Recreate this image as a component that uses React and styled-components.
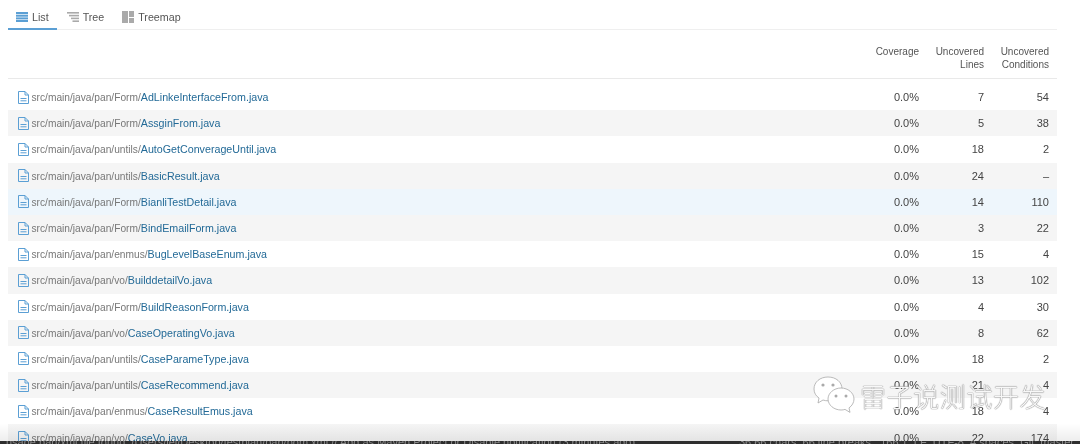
import React from "react"
import styled, { createGlobalStyle } from "styled-components"

const GlobalStyle = createGlobalStyle`
  html, body {
    margin: 0;
    padding: 0;
    background: #fff;
    overflow: hidden;
  }
  body {
    font-family: "Liberation Sans", Arial, sans-serif;
    font-size: 11px;
    color: #444;
  }
`

const Page = styled.div`
  position: relative;
  width: 1080px;
  height: 444px;
  overflow: hidden;
  padding: 0 23px 0 8px;
  box-sizing: border-box;
  filter: blur(0.35px);
`

const Tabs = styled.div`
  display: flex;
  height: 29px;
  border-bottom: 1px solid #efefef;
  box-sizing: content-box;
`

const Tab = styled.div`
  display: flex;
  align-items: center;
  gap: 4px;
  height: 30px;
  box-sizing: border-box;
  padding: 6px 8px 0 8px;
  margin-right: 2px;
  font-size: 10.7px;
  color: #555;
  border-bottom: 2px solid ${p => (p.$active ? "#5b9fd4" : "transparent")};

  svg {
    display: block;
  }
`

const HeaderRow = styled.div`
  display: grid;
  grid-template-columns: 1fr 65px 65px 65px;
  height: 48px;
  border-bottom: 1px solid #e9e9e9;
  margin-bottom: 5px;
`

const HeaderCell = styled.div`
  grid-column: ${p => p.$col};
  padding: 15px 8px 0 0;
  text-align: right;
  font-size: 10px;
  line-height: 13px;
  color: #555;
`

const Row = styled.div`
  display: grid;
  grid-template-columns: 1fr 65px 65px 65px;
  align-items: center;
  height: 26.2px;
  background: ${p => (p.$hl ? "#eef6fc" : p.$odd ? "#f5f5f5" : "#fff")};
`

const FileCell = styled.div`
  display: flex;
  align-items: center;
  padding-left: 10px;
  white-space: nowrap;
`

const FileIcon = styled.svg`
  width: 11px;
  height: 13px;
  margin-right: 2.5px;
  flex: none;
`

const FilePath = styled.span`
  font-size: 10.2px;
  color: #777;
`

const FileLink = styled.span`
  font-size: 10.7px;
  color: #236a97;
`

const Num = styled.div`
  padding-right: 8px;
  text-align: right;
  font-size: 11px;
  color: #444;
`

const BottomFade = styled.div`
  position: absolute;
  left: 0;
  right: 0;
  bottom: 3px;
  height: 17px;
  background: linear-gradient(rgba(0, 0, 0, 0), rgba(0, 0, 0, 0.07));
`

const StatusBar = styled.div`
  position: absolute;
  left: 0;
  right: 0;
  bottom: 0;
  height: 3px;
  overflow: hidden;
  background: #2e2e2e;
  display: flex;
  justify-content: space-between;
  padding: 0 6px;
  font-size: 11px;
  line-height: 3px;
  color: #8a8a8a;
  white-space: nowrap;
`

const Watermark = styled.div`
  position: absolute;
  left: 813px;
  top: 376px;
  display: flex;
  align-items: center;
  gap: 5px;
`

const WatermarkText = styled.span`
  font-family: "Noto Sans CJK SC", sans-serif;
  font-weight: 300;
  font-size: 26px;
  letter-spacing: 0.6px;
  color: rgba(255, 255, 255, 0.95);
  text-shadow: 0 0 1px #666, 0 0 1px #888;
`

const rows = [
  ["src/main/java/pan/Form/", "AdLinkeInterfaceFrom.java", "7", "54"],
  ["src/main/java/pan/Form/", "AssginFrom.java", "5", "38"],
  ["src/main/java/pan/untils/", "AutoGetConverageUntil.java", "18", "2"],
  ["src/main/java/pan/untils/", "BasicResult.java", "24", "–"],
  ["src/main/java/pan/Form/", "BianliTestDetail.java", "14", "110"],
  ["src/main/java/pan/Form/", "BindEmailForm.java", "3", "22"],
  ["src/main/java/pan/enmus/", "BugLevelBaseEnum.java", "15", "4"],
  ["src/main/java/pan/vo/", "BuilddetailVo.java", "13", "102"],
  ["src/main/java/pan/Form/", "BuildReasonForm.java", "4", "30"],
  ["src/main/java/pan/vo/", "CaseOperatingVo.java", "8", "62"],
  ["src/main/java/pan/untils/", "CaseParameType.java", "18", "2"],
  ["src/main/java/pan/untils/", "CaseRecommend.java", "21", "4"],
  ["src/main/java/pan/enmus/", "CaseResultEmus.java", "18", "4"],
  ["src/main/java/pan/vo/", "CaseVo.java", "22", "174"],
]

function ListIcon() {
  return (
    <svg width="12" height="10" viewBox="0 0 12 10" fill="#5b9fd4">
      <rect x="0" y="0" width="12" height="2" />
      <rect x="0" y="2.7" width="12" height="2" />
      <rect x="0" y="5.4" width="12" height="2" />
      <rect x="0" y="8" width="12" height="2" />
    </svg>
  )
}

function TreeIcon() {
  return (
    <svg width="12" height="10" viewBox="0 0 12 10" fill="#aaa">
      <rect x="0" y="0" width="12" height="1.6" />
      <rect x="2" y="2.8" width="10" height="1.6" />
      <rect x="4" y="5.6" width="8" height="1.6" />
      <rect x="5.5" y="8.4" width="6.5" height="1.6" />
    </svg>
  )
}

function TreemapIcon() {
  return (
    <svg width="12" height="12" viewBox="0 0 12 12" fill="#aaa">
      <rect x="0" y="0" width="6" height="12" />
      <rect x="7" y="0" width="5" height="6" />
      <rect x="7" y="7" width="5" height="5" />
    </svg>
  )
}

function DocIcon() {
  return (
    <FileIcon viewBox="0 0 11 13" fill="none" stroke="#5b9fd4" strokeWidth="1">
      <path d="M0.5 0.5H7L10.5 4V12.5H0.5Z" />
      <path d="M7 0.5V4H10.5" />
      <path d="M2.5 7.5H8.5M2.5 9.8H8.5" />
    </FileIcon>
  )
}

function WeChatIcon() {
  return (
    <svg width="42" height="38" viewBox="0 0 42 38">
      <path
        d="M15 1C7 1 1 6 1 13c0 4 2 7 5 9l-1 5 5-3c2 .6 3 .8 5 .8C23 25 29 20 29 13S23 1 15 1Z"
        fill="#fff"
        stroke="#aaa"
        strokeWidth="0.8"
      />
      <path
        d="M28 12c-7 0-13 5-13 11s6 11 13 11c1.500 0 3-.2 4-.6l5 3-1-4.500c3-2 5-5.400 5-8.900 0-6-6-11-13-11Z"
        fill="#fff"
        stroke="#aaa"
        strokeWidth="0.8"
      />
      <circle cx="10" cy="9" r="1.600" fill="#aaa" />
      <circle cx="20" cy="9" r="1.600" fill="#aaa" />
      <circle cx="23" cy="20" r="1.500" fill="#aaa" />
      <circle cx="33" cy="20" r="1.500" fill="#aaa" />
    </svg>
  )
}

export default function App() {
  return (
    <Page>
      <GlobalStyle />
      <Tabs>
        <Tab $active>
          <ListIcon />
          List
        </Tab>
        <Tab>
          <TreeIcon />
          Tree
        </Tab>
        <Tab>
          <TreemapIcon />
          Treemap
        </Tab>
      </Tabs>
      <HeaderRow>
        <HeaderCell $col={2}>Coverage</HeaderCell>
        <HeaderCell $col={3}>
          Uncovered
          <br />
          Lines
        </HeaderCell>
        <HeaderCell $col={4}>
          Uncovered
          <br />
          Conditions
        </HeaderCell>
      </HeaderRow>
      {rows.map((r, i) => (
        <Row key={r[1]} $odd={i % 2 === 1} $hl={i === 4}>
          <FileCell>
            <DocIcon />
            <span>
              <FilePath>{r[0]}</FilePath>
              <FileLink>{r[1]}</FileLink>
            </span>
          </FileCell>
          <Num>0.0%</Num>
          <Num>{r[2]}</Num>
          <Num>{r[3]}</Num>
        </Row>
      ))}
      <BottomFade />
      <Watermark>
        <WeChatIcon />
        <WatermarkText>雷子说测试开发</WatermarkText>
      </Watermark>
      <StatusBar>
        <span>usage pan/xml file found. /Users/lei/Desktop/testplan/pan/pom.xml // Add as Maven Project or Disable notification (3 minutes ago)</span>
        <span>36:66 chars, 66 line breaks&nbsp;&nbsp;&nbsp;166:1&nbsp;&nbsp;LF&nbsp;&nbsp;UTF-8&nbsp;&nbsp;4 spaces&nbsp;&nbsp;Git: master</span>
      </StatusBar>
    </Page>
  )
}
